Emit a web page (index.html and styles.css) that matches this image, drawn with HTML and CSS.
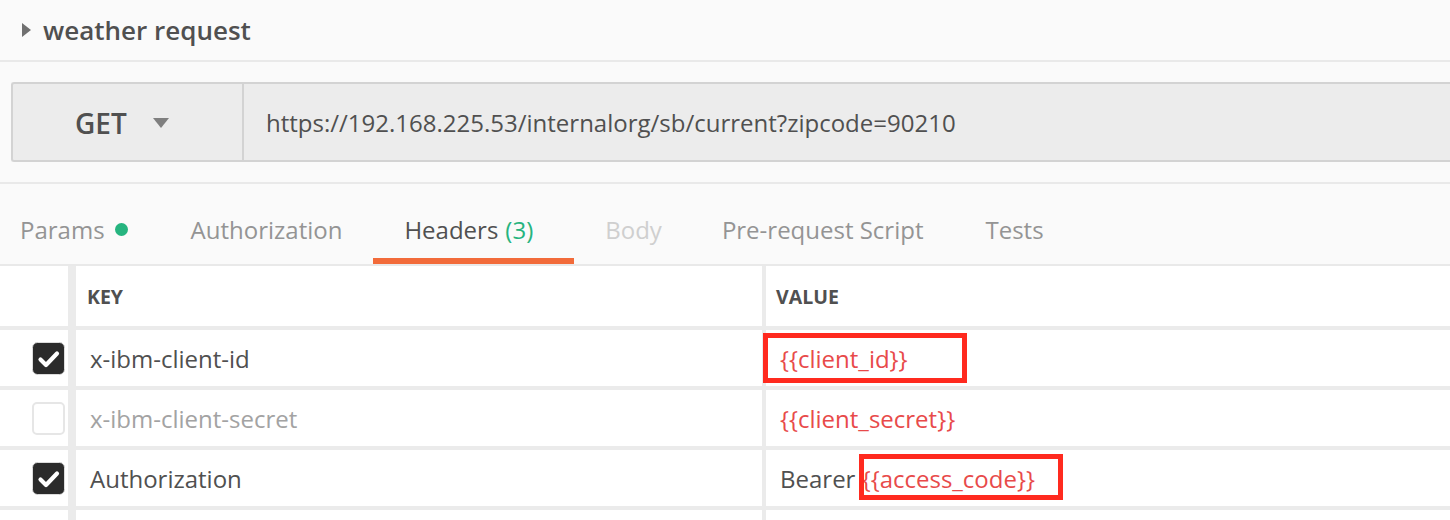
FILE: index.html
```html
<!DOCTYPE html>
<html lang="en">
<head>
<meta charset="utf-8">
<title>weather request</title>
<link rel="stylesheet" href="styles.css">
</head>
<body>
<header class="title-bar">
  <span class="toggle"></span>
  <h1 class="title">weather request</h1>
</header>

<section class="url-section">
  <div class="url-box">
    <div class="method">
      <span>GET</span>
      <svg class="method-caret" width="16" height="10" viewBox="0 0 16 10"><path d="M0 0 H16 L8 10 Z" fill="#7f7f7f"/></svg>
    </div>
    <div class="url">https://192.168.225.53/internalorg/sb/current?zipcode=90210</div>
  </div>
</section>

<nav class="tabs">
  <div class="tab tab-first">Params<span class="dot"></span></div>
  <div class="tab">Authorization</div>
  <div class="tab tab-active">Headers<span class="count">(3)</span></div>
  <div class="tab tab-disabled">Body</div>
  <div class="tab">Pre-request Script</div>
  <div class="tab">Tests</div>
</nav>

<div class="table">
  <div class="row row-head">
    <div class="cell cell-check"></div>
    <div class="cell cell-key">KEY</div>
    <div class="cell cell-value">VALUE</div>
  </div>
  <div class="row">
    <div class="cell cell-check">
      <svg class="box" width="33" height="33" viewBox="0 0 33 33"><rect x="0.5" y="0.5" width="32" height="32" rx="5" fill="#2b2b2b" stroke="#dcdcdc" stroke-width="1"/><path d="M8.5 17.5 L14 23 L25 11.5" fill="none" stroke="#fff" stroke-width="4.2" stroke-linecap="round" stroke-linejoin="round"/></svg>
    </div>
    <div class="cell cell-key">x-ibm-client-id</div>
    <div class="cell cell-value"><span class="var">{{client_id}}</span><span class="mark mark-1"></span></div>
  </div>
  <div class="row">
    <div class="cell cell-check">
      <span class="box box-empty"></span>
    </div>
    <div class="cell cell-key key-off">x-ibm-client-secret</div>
    <div class="cell cell-value"><span class="var">{{client_secret}}</span></div>
  </div>
  <div class="row">
    <div class="cell cell-check">
      <svg class="box" width="33" height="33" viewBox="0 0 33 33"><rect x="0.5" y="0.5" width="32" height="32" rx="5" fill="#2b2b2b" stroke="#dcdcdc" stroke-width="1"/><path d="M8.5 17.5 L14 23 L25 11.5" fill="none" stroke="#fff" stroke-width="4.2" stroke-linecap="round" stroke-linejoin="round"/></svg>
    </div>
    <div class="cell cell-key">Authorization</div>
    <div class="cell cell-value">Bearer&nbsp;<span class="var">{{access_code}}</span><span class="mark mark-2"></span></div>
  </div>
  <div class="row row-last">
    <div class="cell cell-check"></div>
    <div class="cell cell-key"></div>
    <div class="cell cell-value"></div>
  </div>
</div>
</body>
</html>
```

FILE: styles.css
```css
* { box-sizing: border-box; }

html, body {
  margin: 0;
  padding: 0;
}

body {
  width: 1450px;
  height: 520px;
  overflow: hidden;
  background: #ffffff;
  font-family: "Open Sans", "DejaVu Sans", sans-serif;
  color: #505050;
}

/* ---------- title bar ---------- */
.title-bar {
  height: 62px;
  display: flex;
  align-items: center;
  padding-left: 22px;
  background: #fafafa;
  border-bottom: 2px solid #e9e9e9;
}

.toggle {
  width: 0;
  height: 0;
  border-left: 9px solid #707070;
  border-top: 7px solid transparent;
  border-bottom: 7px solid transparent;
  margin-right: 12px;
}

.title {
  margin: 0;
  font-size: 26px;
  font-weight: 600;
  color: #505050;
  line-height: 1;
}

/* ---------- url section ---------- */
.url-section {
  background: #fafafa;
  padding: 20px 0 20px 11px;
  border-bottom: 2px solid #e9e9e9;
}

.url-box {
  height: 80px;
  display: flex;
  background: #ececec;
  border: 2px solid #d3d3d3;
  border-right: none;
  border-radius: 3px 0 0 3px;
  margin-right: -10px;
}

.method {
  width: 231px;
  display: flex;
  align-items: center;
  padding-left: 62px;
  padding-top: 2px;
  border-right: 2px solid #d3d3d3;
  font-size: 28px;
  font-weight: 600;
  color: #505050;
}

.method-caret {
  margin-left: 26px;
}

.url {
  display: flex;
  align-items: center;
  padding-left: 22px;
  font-size: 24px;
  color: #505050;
}

/* ---------- tabs ---------- */
.tabs {
  display: flex;
  height: 82px;
  background: #fafafa;
  border-bottom: 2px solid #e9e9e9;
}

.tab {
  height: 80px;
  display: flex;
  align-items: center;
  padding: 16px 31px 0 31px;
  border-bottom: 6px solid transparent;
  font-size: 24px;
  color: #949494;
  white-space: nowrap;
}

.tab-first {
  padding-left: 20px;
  padding-right: 32px;
}

.dot {
  width: 13px;
  height: 13px;
  border-radius: 50%;
  background: #26b47f;
  margin-left: 10px;
  margin-top: 1px;
}

.tab-active {
  color: #505050;
  border-bottom-color: #f26b3a;
  padding-right: 41px;
}

.count {
  color: #26b47f;
  margin-left: 7px;
}

.tab-disabled {
  color: #cfcfcf;
  padding-right: 29px;
}

/* ---------- headers table ---------- */
.row {
  display: grid;
  grid-template-columns: 68px 694px 1fr;
  height: 60px;
  border-bottom: 4px solid #ebebeb;
}

.row-head {
  height: 64px;
}

.row-last {
  height: 10px;
  border-bottom: none;
}

.cell {
  display: flex;
  align-items: center;
  font-size: 24px;
  color: #505050;
  white-space: nowrap;
}

.cell-check {
  justify-content: flex-end;
  padding-right: 3px;
}

.cell-key {
  border-left: 8px solid #ebebeb;
  padding-left: 14px;
}

.cell-value {
  position: relative;
  border-left: 4px solid #ebebeb;
  padding-left: 14px;
}

.row-head .cell {
  font-size: 19.5px;
  font-weight: 700;
  color: #505050;
}

.row-head .cell-key { padding-left: 11px; }
.row-head .cell-value { padding-left: 10px; }

.box {
  display: block;
  width: 33px;
  height: 33px;
}

.box-empty {
  background: #ffffff;
  border: 2px solid #e6e6e6;
  border-radius: 5px;
}

.key-off {
  color: #a3a3a3;
}

.var {
  color: #e84a4a;
}

/* annotation boxes drawn over the values */
.mark {
  position: absolute;
  border: 5px solid #ff2a1f;
  pointer-events: none;
}

.mark-1 {
  left: -3px;
  top: 3px;
  width: 204px;
  height: 50px;
}

.mark-2 {
  left: 93px;
  top: 4px;
  width: 204px;
  height: 46px;
}
```
